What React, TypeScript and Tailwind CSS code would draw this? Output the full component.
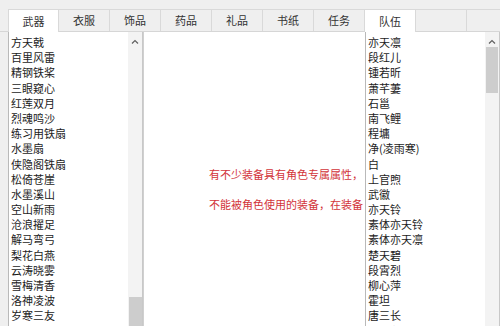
import React from "react";

const tabs = ["武器", "衣服", "饰品", "药品", "礼品", "书纸", "任务", "队伍", "", ""];
const selectedTabs = ["武器", "队伍"];

const weapons = [
  "方天戟",
  "百里风雷",
  "精钢铁桨",
  "三眼窥心",
  "红莲双月",
  "烈魂鸣沙",
  "练习用铁扇",
  "水墨扇",
  "侠隐阁铁扇",
  "松倚苍崖",
  "水墨溪山",
  "空山新雨",
  "沧浪擢足",
  "解马弯弓",
  "梨花白燕",
  "云涛晓雾",
  "雪梅清香",
  "洛神凌波",
  "岁寒三友",
  "清风明月",
];

const members = [
  "亦天凛",
  "段红儿",
  "锺若昕",
  "萧芊萋",
  "石邕",
  "南飞鲤",
  "程墉",
  "净(凌雨寒)",
  "白",
  "上官煦",
  "武徽",
  "亦天铃",
  "素体亦天铃",
  "素体亦天凛",
  "楚天碧",
  "段霄烈",
  "柳心萍",
  "霍坦",
  "唐三长",
  "素体段红儿",
];

const UpArrow: React.FC = () => (
  <svg width="8" height="5" viewBox="0 0 8 5" className="block">
    <path d="M1 4.5 L4 1.5 L7 4.5" fill="none" stroke="#606060" strokeWidth="1.2" />
  </svg>
);

interface ListBoxProps {
  items: string[];
  thumbTop?: boolean;
}

const ListBox: React.FC<ListBoxProps> = ({ items, thumbTop }) => (
  <div className="flex w-[135px] shrink-0 bg-white border-l border-[#b9b9b9] overflow-hidden">
    <ul className="flex-1 pl-[2px] pt-[3px] overflow-hidden">
      {items.map((name) => (
        <li key={name} className="h-[15.2px] leading-[15.2px] whitespace-nowrap text-[#1c1c1c]">
          {name}
        </li>
      ))}
    </ul>
    <div className="w-[15px] shrink-0 bg-[#f3f3f3] flex flex-col items-center border-r border-[#c8c8c8]">
      <div className="h-[15px] flex items-center justify-center pt-[3px]">
        <UpArrow />
      </div>
      {thumbTop ? (
        <div className="w-[12px] h-[46px] bg-[#cdcdcd]" />
      ) : (
        <div className="flex-1 w-full flex flex-col justify-end items-center">
          <div className="w-[13px] h-[29px] bg-[#cdcdcd]" />
        </div>
      )}
    </div>
  </div>
);

const App: React.FC = () => {
  return (
    <div
      className="w-[500px] h-[326px] bg-[#efefef] flex flex-col overflow-hidden text-[11px]"
      style={{ fontFamily: '"Noto Sans CJK SC", "Noto Sans", sans-serif' }}
    >
      {/* tab strip */}
      <div className="h-[32px] shrink-0 flex items-end pl-[8px] border-b border-[#d6d6d6]">
        {tabs.map((tab, i) => {
          const selected = selectedTabs.includes(tab);
          return (
            <div
              key={i}
              className={`w-[51px] h-[22px] shrink-0 flex items-center justify-center border-t border-r border-[#d9d9d9] text-[#333] ${
                i === 0 ? "border-l" : ""
              } ${selected ? "bg-white -mb-px h-[23px]" : "bg-[#efefef]"}`}
            >
              {tab}
            </div>
          );
        })}
      </div>

      {/* body */}
      <div className="flex-1 flex pl-[8px] min-h-0">
        <ListBox items={weapons} />

        <div className="flex-1 min-w-0 bg-white border-l border-[#d0d0d0] overflow-hidden pl-[65px] pt-[136px] text-[#d2343a] whitespace-nowrap">
          <p className="leading-[12px]">有不少装备具有角色专属属性，</p>
          <p className="leading-[12px] mt-[18px]">不能被角色使用的装备，在装备</p>
        </div>

        <ListBox items={members} thumbTop />
      </div>
    </div>
  );
};

export default App;
